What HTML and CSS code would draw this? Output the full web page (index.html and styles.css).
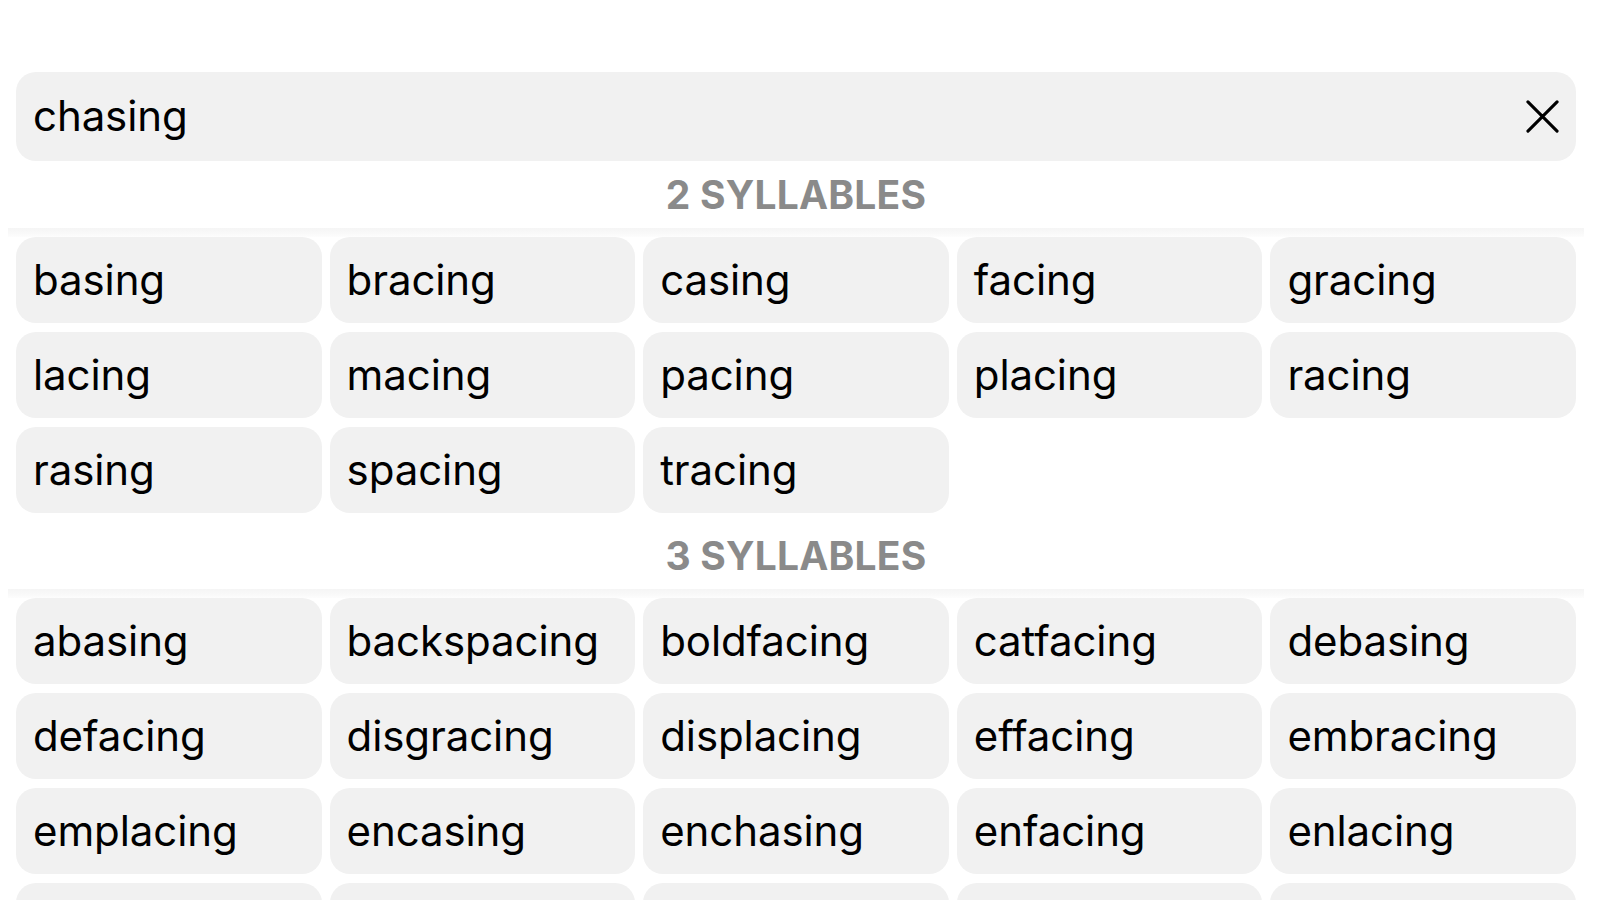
FILE: index.html
```html
<!doctype html><html lang="en"><head>
<meta charset="utf-8" />
<meta name="viewport" content="width=device-width" />
<title>Rhymes</title>
<link rel="stylesheet" href="styles.css"></head><body>
<div class="page">
	<div class="search flex ac">
		<span class="auto query">chasing</span>
		<svg class="clear" viewBox="0 0 34 34" width="34" height="34"><path d="M2 2L32 32M32 2L2 32" /></svg>
	</div>
	<div class="cap">2 SYLLABLES</div>
	<div class="rule"></div>
	<div class="grid">
		<div class="word">basing</div>
		<div class="word">bracing</div>
		<div class="word">casing</div>
		<div class="word">facing</div>
		<div class="word">gracing</div>
		<div class="word">lacing</div>
		<div class="word">macing</div>
		<div class="word">pacing</div>
		<div class="word">placing</div>
		<div class="word">racing</div>
		<div class="word">rasing</div>
		<div class="word">spacing</div>
		<div class="word">tracing</div>
	</div>
	<div class="cap">3 SYLLABLES</div>
	<div class="rule"></div>
	<div class="grid">
		<div class="word">abasing</div>
		<div class="word">backspacing</div>
		<div class="word">boldfacing</div>
		<div class="word">catfacing</div>
		<div class="word">debasing</div>
		<div class="word">defacing</div>
		<div class="word">disgracing</div>
		<div class="word">displacing</div>
		<div class="word">effacing</div>
		<div class="word">embracing</div>
		<div class="word">emplacing</div>
		<div class="word">encasing</div>
		<div class="word">enchasing</div>
		<div class="word">enfacing</div>
		<div class="word">enlacing</div>
		<div class="word"></div>
		<div class="word"></div>
		<div class="word"></div>
		<div class="word"></div>
		<div class="word"></div>
	</div>
</div>
</body></html>
```

FILE: styles.css
```css
html, body{ margin: 0; height: 100%; overflow: hidden; background: #fff }
body{ font: 42px/1.2 Inter, "Liberation Sans", sans-serif; color: #000 }
.flex{ display: flex }
.flex .auto{ flex: 1 }
.ac{ align-items: center }
.page{ padding: 72px 24px 0 16px }
.search{ height: 89px; background: #f1f1f1; border-radius: 20px; padding: 0 17px; box-sizing: border-box }
.search .query{ font-size: 42px; letter-spacing: -0.1px }
.search .clear{ width: 33px; height: 33px; fill: none; stroke: #000; stroke-width: 3.2; stroke-linecap: round }
.cap{ height: 67px; line-height: 67px; text-align: center; font-weight: 700; font-size: 39px; color: #8a8a8a; letter-spacing: 0.2px }
.rule{ height: 9px; margin: 0 -8px; background: linear-gradient(#f5f5f5, #f9f9f9 60%, #fdfdfd) }
.grid{ display: grid; grid-template-columns: repeat(5, 1fr); column-gap: 8px; row-gap: 9px; padding-bottom: 9px }
.word{ height: 86px; line-height: 86px; background: #f1f1f1; border-radius: 20px; padding: 0 17px; white-space: nowrap; overflow: hidden; letter-spacing: -0.1px }
```
